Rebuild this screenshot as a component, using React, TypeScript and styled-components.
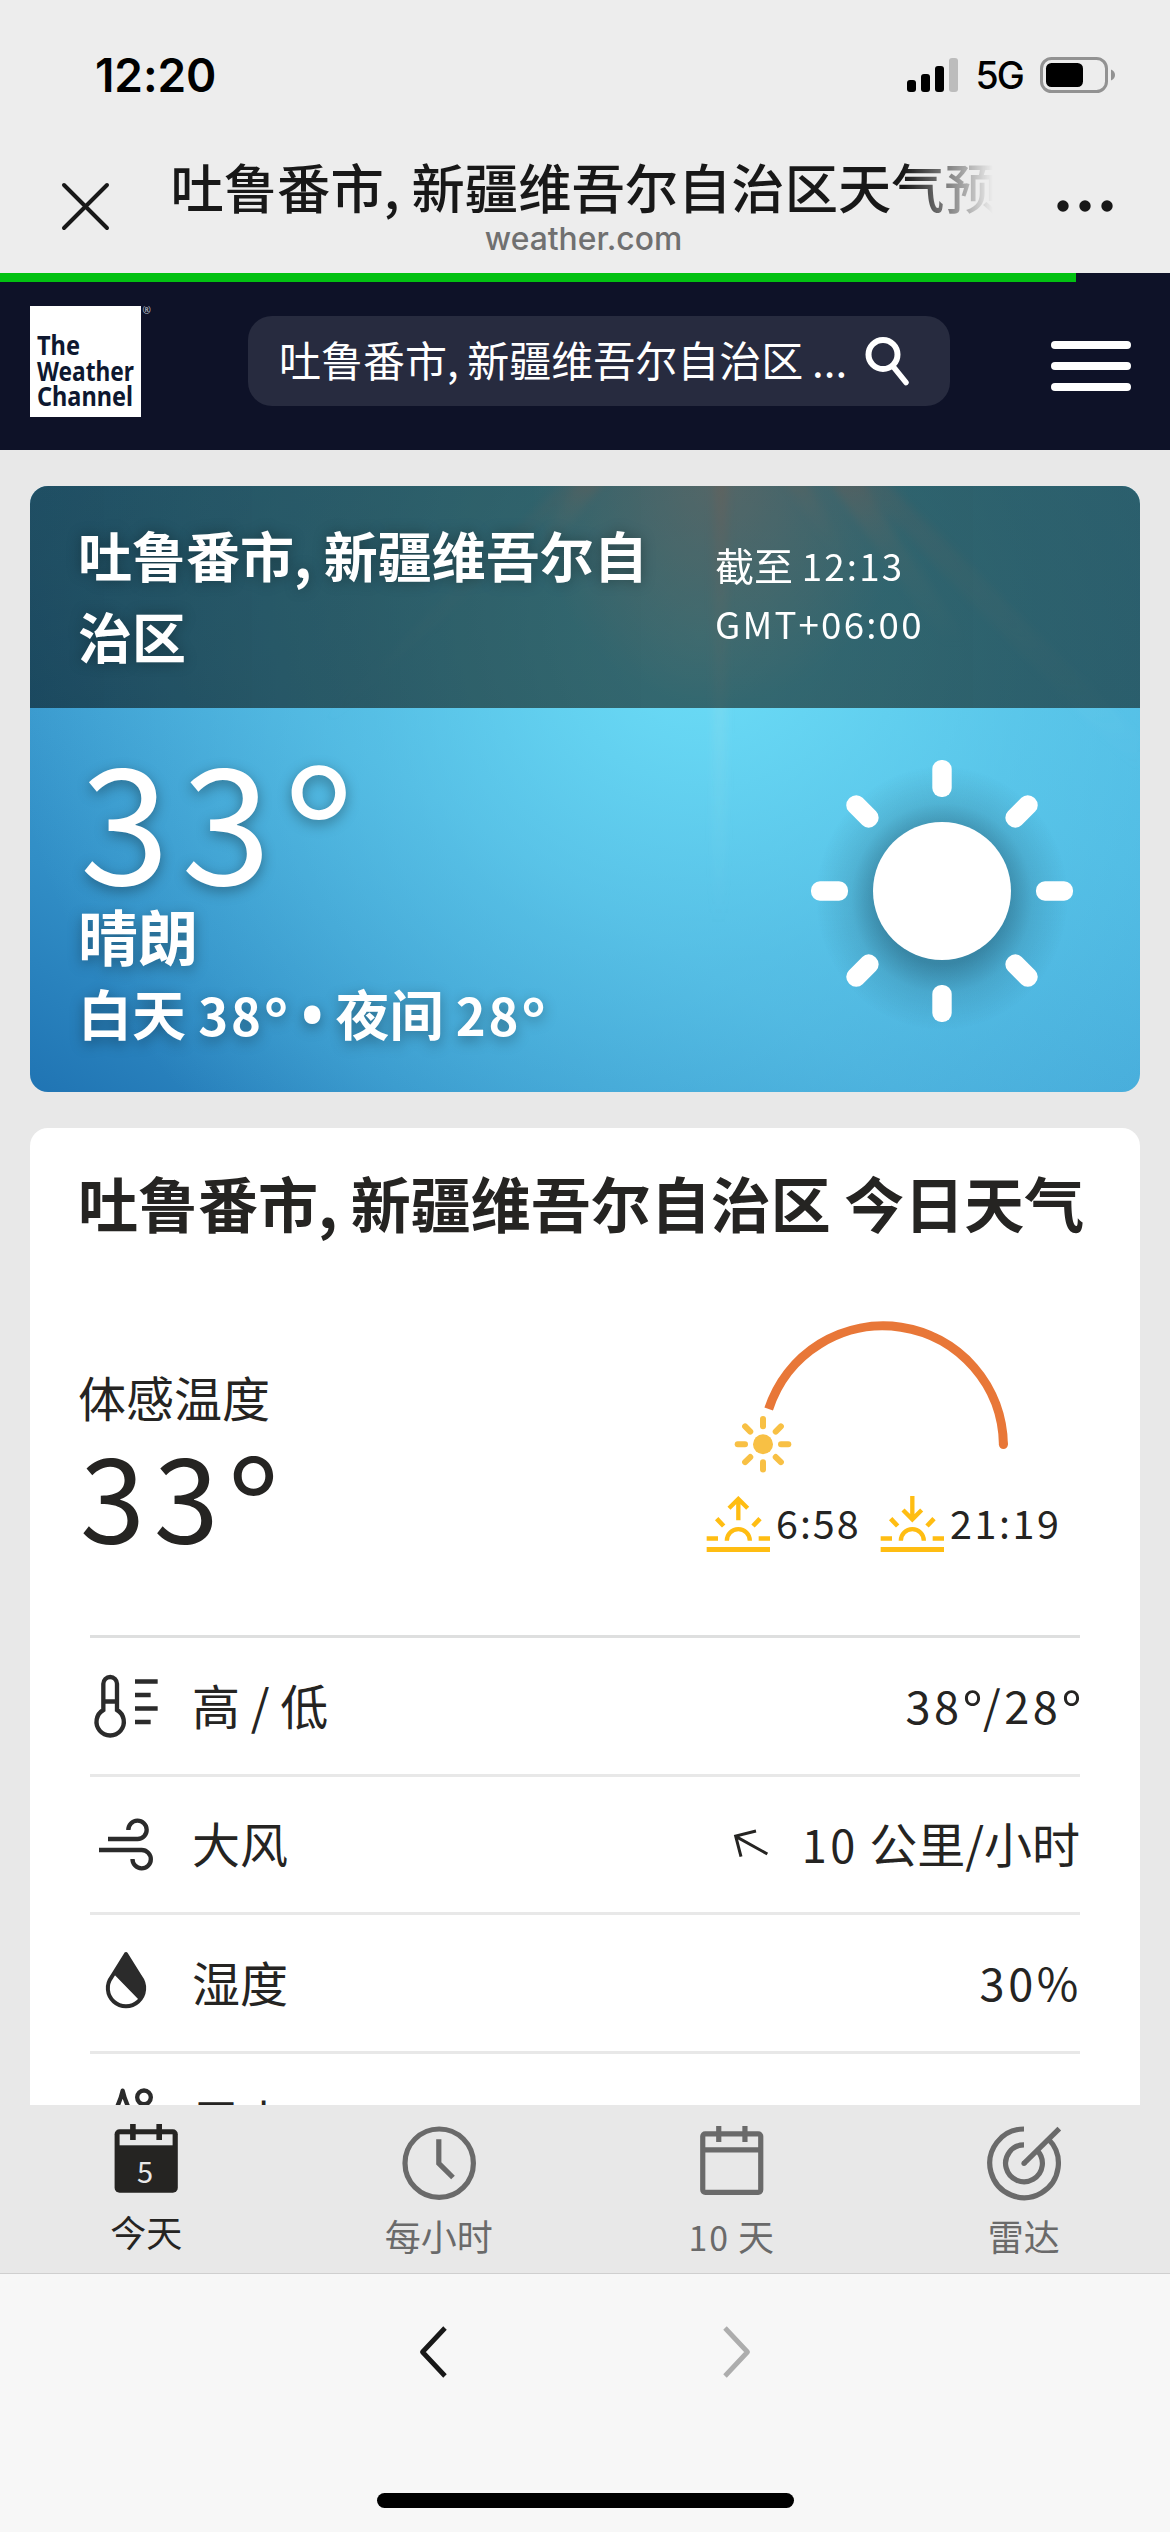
import React from "react";
import styled, { createGlobalStyle } from "styled-components";

const CJK = `"Noto Sans CJK SC", "Noto Sans", sans-serif`;
const UI = `Inter, "Noto Sans CJK SC", sans-serif`;

const GlobalStyle = createGlobalStyle`
  * { box-sizing: border-box; }
  body { margin: 0; background: #e8e8e8; font-family: ${CJK}; }
  h1, h2, p, ul, dl, dt, dd { margin: 0; padding: 0; list-style: none; }
  svg { display: block; flex: none; }
`;

const Screen = styled.div`
  width: 1170px;
  height: 2532px;
  display: flex;
  flex-direction: column;
  overflow: hidden;
  color: #252422;
`;

/* ---------- System chrome ---------- */

const StatusBar = styled.div`
  height: 141px;
  padding: 9px 54px 0 95px;
  display: flex;
  align-items: center;
  justify-content: space-between;
  background: #ededed;
  font-family: ${UI};
  color: #000;
`;

const Clock = styled.span`
  font-size: 46px;
  font-weight: 600;
  line-height: 50px;
  letter-spacing: -0.1px;
`;

const StatusIcons = styled.div`
  display: flex;
  align-items: center;
  gap: 17px;
`;

const Network = styled.span`
  font-size: 37.5px;
  font-weight: 500;
  line-height: 40px;
  letter-spacing: -1.8px;
  padding-top: 2px;
`;

const BrowserBar = styled.header`
  height: 132px;
  padding: 9px 54px 0 60px;
  display: flex;
  align-items: flex-start;
  justify-content: space-between;
  background: #ededed;
`;

const PageHeading = styled.div`
  width: 826px;
  display: flex;
  flex-direction: column;
  align-items: center;
`;

const PageTitle = styled.div`
  width: 826px;
  height: 78px;
  line-height: 72px;
  font-size: 53.3px;
  font-weight: 500;
  color: #181818;
  white-space: nowrap;
  overflow: hidden;
  mask-image: linear-gradient(90deg, #000 733px, transparent 822px);
`;

const PageHost = styled.div`
  margin-top: -9px;
  font-family: ${UI};
  font-size: 31.8px;
  font-weight: 500;
  line-height: 40px;
  color: #707070;
`;

const IconSlot = styled.div<{ $top: number }>`
  padding-top: ${(p) => p.$top}px;
`;

const ProgressTrack = styled.div`
  height: 9px;
  background: #0e1228;
`;

const ProgressFill = styled.div`
  width: 1076px;
  height: 9px;
  background: #02c112;
`;

/* ---------- Site header ---------- */

const SiteHeader = styled.nav`
  height: 168px;
  flex: none;
  padding: 24px 39px 0 30px;
  display: flex;
  align-items: flex-start;
  justify-content: space-between;
  background: #0e1228;
`;

const SearchBox = styled.div`
  width: 702px;
  height: 90px;
  margin-top: 10px;
  margin-right: 7px;
  padding: 0 40px 0 31px;
  display: flex;
  align-items: center;
  justify-content: space-between;
  border-radius: 24px;
  background: #272b3f;
  color: #fff;
  font-size: 42px;
  line-height: 60px;
  white-space: nowrap;
`;

const SearchText = styled.span`
  padding-bottom: 4px;
  word-spacing: -0.017em;
`;

const MenuButton = styled.div`
  width: 80px;
  margin-top: 35px;
  display: grid;
  gap: 13px;
`;

const MenuBar = styled.i`
  height: 8px;
  border-radius: 4px;
  background: #fff;
`;

/* ---------- Content ---------- */

const Content = styled.main`
  height: 1655px;
  flex: none;
  padding: 36px 30px 0;
  display: flex;
  flex-direction: column;
  gap: 36px;
  overflow: hidden;
  background: #e8e8e8;
`;

const Num = styled.span<{ $track?: number }>`
  font-size: 0.94em;
  letter-spacing: ${(p) => p.$track ?? 0.075}em;
`;

const DegreeSign = styled.span`
  font-size: 1.2em;
  line-height: 0;
  vertical-align: -0.145em;
  letter-spacing: 0.01em;
`;

const CurrentCard = styled.section`
  position: relative;
  height: 606px;
  flex: none;
  border-radius: 18px;
  overflow: hidden;
  color: #fff;
  background:
    radial-gradient(ellipse 190px 230px at 690px -10px, rgba(255, 215, 208, 0.5), rgba(255, 200, 190, 0) 100%),
    radial-gradient(ellipse 700px 680px at 670px 150px, rgba(112, 226, 250, 0.92), rgba(104, 215, 243, 0.5) 48%, rgba(90, 200, 235, 0) 100%),
    linear-gradient(32deg, #2074b3 0%, #318ec6 18%, #43a5d6 42%, #4ab3df 70%, #4fbae4 100%);
`;

const Rays = styled.svg`
  position: absolute;
  inset: 0;
`;

const CurrentHeader = styled.div`
  position: relative;
  height: 222px;
  padding: 0 50px 5px 48px;
  display: flex;
  align-items: center;
  background: linear-gradient(90deg, rgba(2, 8, 8, 0.56), rgba(8, 10, 0, 0.55) 40%, rgba(6, 10, 4, 0.54));
`;

const Place = styled.h1`
  width: 637px;
  padding-right: 50px;
  font-size: 54px;
  font-weight: 700;
  line-height: 81px;
  text-shadow: 0 0 14px rgba(0, 0, 0, 0.35);
`;

const AsOf = styled.div`
  font-size: 39px;
  font-weight: 400;
  line-height: 57px;
  padding-bottom: 2px;
`;

const CurrentBody = styled.div`
  position: relative;
  height: 384px;
  padding: 23px 50px 0 48px;
  display: flex;
  justify-content: space-between;
  text-shadow: 0 4px 14px rgba(0, 0, 0, 0.35);
`;

const Temperature = styled.div<{ $size: number; $line: number }>`
  padding-left: ${(p) => (p.$size > 150 ? 2 : 0)}px;
  font-size: ${(p) => p.$size}px;
  line-height: ${(p) => p.$line}px;
  height: ${(p) => p.$line}px;
  letter-spacing: 0.075em;
  white-space: nowrap;
`;

const Phrase = styled.div`
  font-size: 60px;
  font-weight: 700;
  line-height: 72px;
`;

const HighLow = styled.div`
  font-size: 54px;
  font-weight: 700;
  line-height: 84px;
  white-space: nowrap;
`;

const Bullet = styled.span`
  font-family: "Noto Sans", sans-serif;
  font-size: 1.08em;
  line-height: 0;
`;

const SunSlot = styled.div`
  margin-right: -50px;
`;

const DetailsCard = styled.section`
  flex: none;
  height: 1100px;
  padding: 32px 50px 0;
  border-radius: 18px 18px 0 0;
  background: #fff;
`;

const DetailsTitle = styled.h2`
  margin-left: -2px;
  font-size: 60px;
  font-weight: 700;
  line-height: 84px;
  word-spacing: -0.005em;
  white-space: nowrap;
`;

const Summary = styled.div`
  height: 391px;
  padding-right: 10px;
  display: flex;
  justify-content: space-between;
`;

const FeelsLike = styled.div`
  padding-top: 116px;
`;

const FeelsLabel = styled.div`
  font-size: 48px;
  line-height: 72px;
  margin-left: -2px;
`;

const SunTimes = styled.div`
  width: 374px;
  padding-top: 66px;
  display: flex;
  flex-direction: column;
  gap: 14px;
`;

const SunTimeRow = styled.div`
  display: flex;
  height: 56px;
`;

const SunTime = styled.div<{ $width: number }>`
  width: ${(p) => p.$width}px;
  display: flex;
  align-items: flex-start;
  gap: 5px;
  font-size: 42px;
  line-height: 51px;
  white-space: nowrap;
`;

const DetailList = styled.ul`
  margin: 0 10px;
`;

const DetailRow = styled.li<{ $first?: boolean }>`
  height: 138.66px;
  display: flex;
  align-items: center;
  gap: 30px;
  border-top: 3px solid ${(p) => (p.$first ? "#dedfdf" : "#e8e8e8")};
  font-size: 48px;
  line-height: 72px;
  white-space: pre;
`;

const DetailLabel = styled.span`
  flex: 1;
  padding-bottom: 4px;
`;

const DetailValue = styled.span<{ $numeric?: boolean }>`
  display: flex;
  align-items: center;
  padding-bottom: 3px;
  margin-right: ${(p) => (p.$numeric ? -2 : 0)}px;
`;

const WindArrow = styled.svg`
  margin-right: 33px;
`;

/* ---------- Tabs and browser toolbar ---------- */

const TabBar = styled.nav`
  height: 169px;
  flex: none;
  display: grid;
  grid-template-columns: repeat(4, 1fr);
  background: #e8e8e8;
  border-bottom: 1px solid #cfcfcf;
`;

const Tab = styled.div<{ $active?: boolean }>`
  padding-top: ${(p) => (p.$active ? 16 : 20)}px;
  display: flex;
  flex-direction: column;
  align-items: center;
  gap: 9px;
  font-size: 36px;
  line-height: 50px;
  color: ${(p) => (p.$active ? "#252422" : "#6a6a6a")};
`;

const Toolbar = styled.footer`
  flex: 1;
  padding: 50px 0 24px;
  display: flex;
  flex-direction: column;
  justify-content: space-between;
  align-items: center;
  background: #f7f7f7;
`;

const HistoryButtons = styled.div`
  width: 332px;
  display: flex;
  justify-content: space-between;
`;

const HomeIndicator = styled.div`
  width: 417px;
  height: 15px;
  border-radius: 8px;
  background: #000;
`;

/* ---------- Drawings ---------- */

const Signal = () => (
  <svg width="51" height="34" viewBox="0 0 51 34">
    <rect x="0" y="22" width="9" height="12" rx="3" />
    <rect x="14" y="16" width="9" height="18" rx="3" />
    <rect x="28" y="8" width="9" height="26" rx="3" />
    <rect x="42" y="0" width="9" height="34" rx="3" fill="#bcbcbc" />
  </svg>
);

const Battery = () => (
  <svg width="76" height="36" viewBox="0 0 76 36">
    <rect x="1.5" y="1.5" width="65" height="33" rx="10" fill="none" stroke="#929292" strokeWidth="3" />
    <rect x="6" y="6" width="37" height="24" rx="5.5" />
    <path d="M71 12.5c2.7 1 4 3 4 5.5s-1.3 4.5-4 5.5z" fill="#929292" />
  </svg>
);

const CloseIcon = () => (
  <svg width="51" height="51" viewBox="0 0 51 51" stroke="#181818" strokeWidth="4" strokeLinecap="round">
    <path d="M4 4l43 43M47 4L4 47" />
  </svg>
);

const MoreIcon = () => (
  <svg width="60" height="14" viewBox="0 0 60 14" fill="#181818">
    <circle cx="7" cy="7" r="5.7" />
    <circle cx="29" cy="7" r="5.7" />
    <circle cx="51" cy="7" r="5.7" />
  </svg>
);

const Logo = () => (
  <svg width="124" height="111" viewBox="0 0 124 111" fontFamily='"Noto Sans", sans-serif'>
    <rect width="111" height="111" fill="#fff" />
    <g fill="#0e1830" fontWeight="700" fontSize="27">
      <text x="7" y="49" textLength="43" lengthAdjust="spacingAndGlyphs">The</text>
      <text x="7" y="74.5" textLength="97" lengthAdjust="spacingAndGlyphs">Weather</text>
      <text x="7" y="100" textLength="96" lengthAdjust="spacingAndGlyphs">Channel</text>
    </g>
    <text x="112.5" y="8" fontSize="10" fill="#c3c5cc">®</text>
  </svg>
);

const SearchIcon = () => (
  <svg width="45" height="50" viewBox="0 0 45 50" fill="none" stroke="#fff" strokeWidth="6" strokeLinecap="round">
    <circle cx="18" cy="18.5" r="14.5" />
    <path d="M28.5 31L41 46.5" strokeWidth="5.5" />
  </svg>
);

const spokes = [0, 45, 90, 135, 180, 225, 270, 315];

const BigSun = () => (
  <svg width="340" height="361" viewBox="800 731 340 361">
    <defs>
      <radialGradient id="glow">
        <stop offset="0.5" stopColor="#143c50" stopOpacity="0.42" />
        <stop offset="0.72" stopColor="#143c50" stopOpacity="0.14" />
        <stop offset="1" stopColor="#143c50" stopOpacity="0" />
      </radialGradient>
    </defs>
    <ellipse cx="942" cy="898" rx="126" ry="132" fill="url(#glow)" />
    <circle cx="942" cy="891" r="69" fill="#fff" />
    {spokes.map((a) => (
      <rect key={a} x="932.3" y="760" width="19.4" height="37" rx="9" fill="#fff" transform={`rotate(${a} 942 891)`} />
    ))}
  </svg>
);

const SunArc = () => (
  <svg width="374" height="172" viewBox="706 1310 374 172">
    <path d="M768.7 1409A120.3 120.3 0 0 1 1003.4 1444.5" fill="none" stroke="#e87738" strokeWidth="9" />
    <circle cx="1003.4" cy="1444.5" r="4.5" fill="#e87738" />
    <circle cx="763" cy="1444.3" r="10" fill="#f8c044" />
    {spokes.map((a) => (
      <rect key={a} x="760" y="1416" width="6" height="13.3" rx="3" fill="#f8c044" transform={`rotate(${a} 763 1444.3)`} />
    ))}
  </svg>
);

const HorizonIcon = ({ rising }: { rising: boolean }) => (
  <svg width="65" height="56" viewBox="77 618 195 168" fill="none" stroke="#ffbd12" strokeWidth="13">
    <path d="M79 778.5H269" strokeWidth="15" />
    <path d="M79 745.5H113M235 745.5H269" />
    <path d="M139.5 752a34.5 34.5 0 0 1 69 0" />
    <path d="M109 686L130 708M239 686L218 708" strokeWidth="14" />
    {rising ? <path d="M174 691V628M146 655l28-28 28 28" /> : <path d="M174 618V686M146 660l28 28 28-28" />}
  </svg>
);

const ThermometerIcon = () => (
  <svg width="72" height="72" viewBox="90 148.5 216 216" fill="none" stroke="#2b2b2b" strokeWidth="13">
    <path d="M130 268.5V190a20.5 20.5 0 0 1 41 0V268.5A41 41 0 1 1 130 268.5ZM130 243H171" />
    <path d="M225 183H293M225 223.5H272M225 264H293M225 304.5H272" />
  </svg>
);

const WindIcon = () => (
  <svg width="72" height="72" viewBox="90 565 216 216" fill="none" stroke="#2b2b2b" strokeWidth="13">
    <path d="M144 658H233A27.5 27.5 0 1 0 205 631" />
    <path d="M117 691H245A27.5 27.5 0 1 1 217.5 718" />
  </svg>
);

const HumidityIcon = () => (
  <svg width="72" height="72" viewBox="90 981 216 216" stroke="#2b2b2b" strokeWidth="12" strokeLinejoin="round">
    <path d="M198 1002L155 1071A54.5 54.5 0 1 0 241 1071Z" fill="none" />
    <path d="M198 1002L163 1060L236 1135A54 54 0 0 0 241 1071Z" fill="#2b2b2b" strokeWidth="5" />
  </svg>
);

const DewPointIcon = () => (
  <svg width="72" height="72" viewBox="90 1397 216 216" fill="none" stroke="#2b2b2b" strokeWidth="13">
    <path d="M188 1411C182 1440 170 1465 155 1490a46 46 0 1 0 66 0C206 1465 194 1440 188 1411Z" strokeLinejoin="round" />
    <circle cx="252" cy="1431" r="20.5" />
  </svg>
);

const TodayIcon = () => (
  <svg width="76" height="76" viewBox="109 2121 76 76">
    <rect x="115.6" y="2129.3" width="63.2" height="63.5" rx="5" fill="#252422" />
    <rect x="120.6" y="2134.3" width="53" height="11" fill="#e8e8e8" />
    <path d="M133.9 2124v16M160.2 2124v16" stroke="#252422" strokeWidth="5.6" />
    <text x="146" y="2183" textAnchor="middle" fontSize="29" fill="#e8e8e8" fontFamily={CJK}>5</text>
  </svg>
);

const HourlyIcon = () => (
  <svg width="76" height="76" viewBox="400 2125 76 76" fill="none" stroke="#6a6a6a" strokeWidth="5.2">
    <circle cx="438.2" cy="2163.2" r="34.2" />
    <path d="M437.8 2139.3V2163.3L452 2177.5" />
  </svg>
);

const TenDayIcon = () => (
  <svg width="76" height="76" viewBox="693.25 2125 76 76" fill="none" stroke="#6a6a6a" strokeWidth="5.2">
    <rect x="703" y="2133.8" width="58" height="58.5" rx="2.5" />
    <path d="M703 2149.8H761M719 2126v16M745.2 2126v16" />
  </svg>
);

const RadarIcon = () => (
  <svg width="76" height="76" viewBox="985 2125 76 76" fill="none" stroke="#6a6a6a" strokeWidth="5.2">
    <path d="M1023 2129A34.3 34.3 0 1 0 1047.3 2139" />
    <path d="M1023 2144.9A18.4 18.4 0 1 0 1036 2150.3" />
    <path d="M1023 2163.3L1058.3 2128.6" />
    <circle cx="1023" cy="2163.3" r="2.6" fill="#6a6a6a" stroke="none" />
  </svg>
);

const Chevron = ({ forward }: { forward?: boolean }) => (
  <svg width="30" height="56" viewBox="0 0 30 56" fill="none" stroke={forward ? "#adadad" : "#181818"} strokeWidth="4.8" strokeLinejoin="round">
    <path d={forward ? "M4 4L26.5 28L4 52" : "M26 4L3.5 28L26 52"} />
  </svg>
);

const Deg = () => <DegreeSign>°</DegreeSign>;

const tabs = [
  { label: "今天", icon: <TodayIcon />, active: true },
  { label: "每小时", icon: <HourlyIcon /> },
  { label: <><Num $track={0.06}>10</Num> 天</>, icon: <TenDayIcon /> },
  { label: "雷达", icon: <RadarIcon /> },
];

export default function App() {
  return (
    <Screen>
      <GlobalStyle />
      <StatusBar>
        <Clock>12:20</Clock>
        <StatusIcons>
          <Signal />
          <Network>5G</Network>
          <Battery />
        </StatusIcons>
      </StatusBar>
      <BrowserBar>
        <IconSlot $top={31}><CloseIcon /></IconSlot>
        <PageHeading>
          <PageTitle>吐鲁番市, 新疆维吾尔自治区天气预报</PageTitle>
          <PageHost>weather.com</PageHost>
        </PageHeading>
        <IconSlot $top={49}><MoreIcon /></IconSlot>
      </BrowserBar>
      <ProgressTrack><ProgressFill /></ProgressTrack>
      <SiteHeader>
        <Logo />
        <SearchBox>
          <SearchText>吐鲁番市, 新疆维吾尔自治区 ...</SearchText>
          <SearchIcon />
        </SearchBox>
        <MenuButton><MenuBar /><MenuBar /><MenuBar /></MenuButton>
      </SiteHeader>

      <Content>
        <CurrentCard>
          <Rays width="1110" height="606" viewBox="0 0 1110 606">
            <defs>
              <linearGradient id="ray" x1="0" y1="0" x2="0" y2="1">
                <stop offset="0" stopColor="#ffb8aa" stopOpacity="0.36" />
                <stop offset="0.35" stopColor="#ffd8cc" stopOpacity="0.16" />
                <stop offset="1" stopColor="#d0ffff" stopOpacity="0" />
              </linearGradient>
              <filter id="soften"><feGaussianBlur stdDeviation="4" /></filter>
            </defs>
            <g fill="url(#ray)" filter="url(#soften)">
              <path d="M684 -10H698L695 440H682Z" opacity="0.8" />
              <path d="M552 -10H578L505 85H485Z" />
              <path d="M796 -10H828L940 160H915Z" />
              <path d="M750 -10H775L822 80H812Z" opacity="0.6" />
              <path d="M820 -10H850L1110 250V290Z" opacity="0.5" />
              <path d="M540 -10H560L300 240H285Z" opacity="0.35" />
            </g>
          </Rays>
          <CurrentHeader>
            <Place>吐鲁番市, 新疆维吾尔自治区</Place>
            <AsOf>截至 <Num $track={0.06}>12:13</Num><br /><Num $track={0.06}>GMT+06:00</Num></AsOf>
          </CurrentHeader>
          <CurrentBody>
            <div>
              <Temperature $size={161} $line={168}>33<Deg /></Temperature>
              <Phrase>晴朗</Phrase>
              <HighLow>白天 <Num $track={0.055}>38<Deg /></Num> <Bullet>•</Bullet> 夜间 <Num $track={0.055}>28<Deg /></Num></HighLow>
            </div>
            <SunSlot><BigSun /></SunSlot>
          </CurrentBody>
        </CurrentCard>

        <DetailsCard>
          <DetailsTitle>吐鲁番市, 新疆维吾尔自治区 今日天气</DetailsTitle>
          <Summary>
            <FeelsLike>
              <FeelsLabel>体感温度</FeelsLabel>
              <Temperature $size={117} $line={120}>33<Deg /></Temperature>
            </FeelsLike>
            <SunTimes>
              <SunArc />
              <SunTimeRow>
                <SunTime $width={174}><HorizonIcon rising /><Num $track={0.05}>6:58</Num></SunTime>
                <SunTime $width={200}><HorizonIcon rising={false} /><Num $track={0.065}>21:19</Num></SunTime>
              </SunTimeRow>
            </SunTimes>
          </Summary>
          <DetailList>
            <DetailRow $first>
              <ThermometerIcon />
              <DetailLabel>高 / 低</DetailLabel>
              <DetailValue $numeric><span><Num $track={0.078}>38<Deg />/28<Deg /></Num></span></DetailValue>
            </DetailRow>
            <DetailRow>
              <WindIcon />
              <DetailLabel>大风</DetailLabel>
              <DetailValue>
                <WindArrow width="36" height="30" viewBox="154 640 108 90" fill="none" stroke="#252422" strokeWidth="9">
                  <path d="M162 665L257 718M223 649L162 664L178 726" />
                </WindArrow>
                <span><Num $track={0.072}>10</Num> 公里/小时</span>
              </DetailValue>
            </DetailRow>
            <DetailRow>
              <HumidityIcon />
              <DetailLabel>湿度</DetailLabel>
              <DetailValue $numeric><Num $track={0.08}>30%</Num></DetailValue>
            </DetailRow>
            <DetailRow>
              <DewPointIcon />
              <DetailLabel>露点</DetailLabel>
            </DetailRow>
          </DetailList>
        </DetailsCard>
      </Content>

      <TabBar>
        {tabs.map((t, i) => (
          <Tab key={i} $active={t.active}>
            {t.icon}
            <span>{t.label}</span>
          </Tab>
        ))}
      </TabBar>
      <Toolbar>
        <HistoryButtons><Chevron /><Chevron forward /></HistoryButtons>
        <HomeIndicator />
      </Toolbar>
    </Screen>
  );
}
